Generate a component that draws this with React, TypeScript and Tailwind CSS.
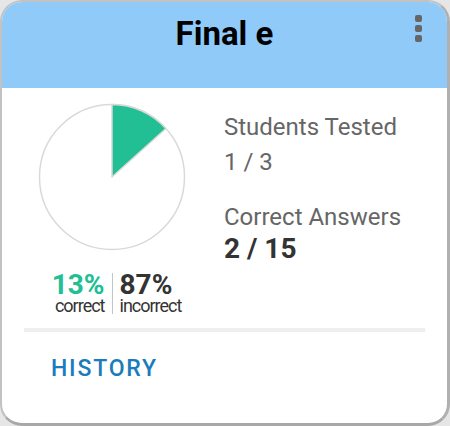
import React from "react";

const font = { fontFamily: "Roboto, 'Liberation Sans', sans-serif" };

function Pie() {
  const cx = 74;
  const cy = 74;
  const r = 72.5;
  const pct = 2 / 15;
  const a = pct * 2 * Math.PI;
  const x = cx + r * Math.sin(a);
  const y = cy - r * Math.cos(a);
  return (
    <svg width="148" height="148" viewBox="0 0 148 148">
      <circle cx={cx} cy={cy} r={r} fill="#ffffff" stroke="#d9d9d9" strokeWidth="1.5" />
      <path
        d={`M ${cx} ${cy} L ${cx} ${cy - r} A ${r} ${r} 0 0 1 ${x} ${y} Z`}
        fill="#21bf93"
        stroke="#d9d9d9"
        strokeWidth="1.5"
        strokeLinejoin="round"
      />
    </svg>
  );
}

export default function App() {
  return (
    <div className="w-[450px] h-[426px] bg-[#e6e6e6]" style={font}>
      <div className="w-full h-full rounded-[22px] border-2 border-[#c2c2c2] border-b-[3px] border-r-[3px] border-b-[#a8a8a8] border-r-[#b0b0b0] bg-white overflow-hidden flex flex-col">
        <div className="relative h-[86px] bg-[#90caf9] flex justify-center pt-[15px] shrink-0">
          <div className="text-[33px] leading-[33px] font-bold text-black">Final e</div>
          <div className="absolute right-[25px] top-[13px] flex flex-col gap-[3px]">
            <div className="w-[7px] h-[7px] rounded-[2px] bg-[#666666]" />
            <div className="w-[7px] h-[7px] rounded-[2px] bg-[#666666]" />
            <div className="w-[7px] h-[7px] rounded-[2px] bg-[#666666]" />
          </div>
        </div>
        <div className="flex items-start pl-[36px] pt-[15px]">
          <div className="w-[148px] flex flex-col">
            <Pie />
            <div className="grid grid-cols-[1fr_1px_1fr] mt-[22px]">
              <div className="flex flex-col items-end pr-[7px]">
                <div className="text-[28px] leading-[24px] font-bold text-[#21bf93]">13%</div>
                <div className="text-[18px] leading-[17px] text-[#333333] tracking-[-1px]">correct</div>
              </div>
              <div className="bg-[#c4c4c4]" />
              <div className="flex flex-col items-start pl-[7px]">
                <div className="text-[28px] leading-[24px] font-bold text-[#333333]">87%</div>
                <div className="text-[18px] leading-[17px] text-[#333333] tracking-[-1px]">incorrect</div>
              </div>
            </div>
          </div>
          <div className="ml-[38px] mt-[8px] flex flex-col">
            <div className="text-[24px] leading-[32px] text-[#666666]">Students Tested</div>
            <div className="text-[24px] leading-[32px] text-[#666666] mt-[3px]">1 / 3</div>
            <div className="text-[24px] leading-[32px] text-[#666666] mt-[23px]">Correct Answers</div>
            <div className="text-[28px] leading-[32px] font-bold text-[#333333]">2 / 15</div>
          </div>
        </div>
        <div className="mx-[22px] mt-[14px] h-[4px] bg-[#eeeeee]" />
        <div className="pl-[49px] pt-[22px]">
          <span className="text-[23px] leading-[30px] font-medium text-[#1a7bbd] tracking-[1.8px]">HISTORY</span>
        </div>
      </div>
    </div>
  );
}
